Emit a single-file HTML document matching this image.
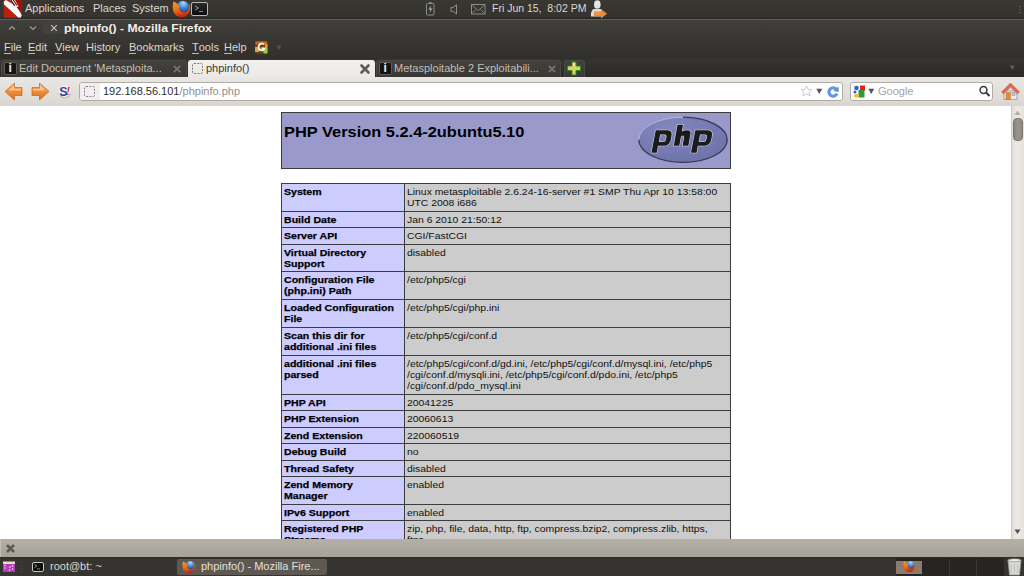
<!DOCTYPE html>
<html><head><meta charset="utf-8">
<style>
*{margin:0;padding:0;box-sizing:border-box}
html,body{width:1024px;height:576px;overflow:hidden;background:#fff}
body{position:relative;font-family:"Liberation Sans",sans-serif;font-size:11px}
.a{position:absolute}
svg.a{overflow:visible}
.t{position:absolute;white-space:pre;line-height:13px}
/* top panel */
#panel{left:0;top:0;width:1024px;height:19px;background:linear-gradient(#383732,#34332f 17px,#2a2926 18px)}
.pt{color:#dcd8cf;top:2px}
#title{left:0;top:19px;width:1024px;height:40px;background:linear-gradient(#63615c 0,#63615c 1px,#403f3b 1px,#393834 18px,#302f2c 100%)}
#menubar{display:none}
.mi{color:#dcd8cf;top:41px}
.mi u{text-decoration:none;border-bottom:1px solid #bdb9b0;display:inline-block;line-height:11px}
#tabstrip{left:0;top:59px;width:1024px;height:18px;background:linear-gradient(#353430,#2c2a28)}
#nav{left:0;top:77px;width:1024px;height:29px;background:linear-gradient(#e9e7e3,#e0ddd8 70%,#d8d4ce)}
#content{left:0;top:106px;width:1011px;height:433px;background:#fff;overflow:hidden}
#scroll{left:1011px;top:106px;width:13px;height:433px;background:linear-gradient(90deg,#dcd9d3,#eceae6 40%,#e6e3de)}
#findbar{left:0;top:539px;width:1024px;height:18px;background:linear-gradient(#b5b0a6,#a7a197)}
#bottom{left:0;top:557px;width:1024px;height:19px;background:linear-gradient(#2b2a27,#353430 2px,#353430)}
.ln{position:absolute;background:#3c3c3c}
.e{position:absolute;background:#ccccff}
.v{position:absolute;background:#cccccc}
.ct{position:absolute;white-space:pre;font-size:9.75px;line-height:11.15px;color:#000;transform-origin:0 0}
.eb{font-weight:bold;transform:scaleX(1.085);-webkit-text-stroke:0.25px #000}
.vr{transform:scaleX(1.065);color:#111}
.tab{position:absolute;top:60px;height:17px;background:linear-gradient(#42413d,#393834);border:1px solid #4a4944;border-bottom:none;border-radius:3px 3px 0 0}
.tabt{color:#c3bfb6;top:62px}
</style></head><body>

<!-- TOP PANEL -->
<div id="panel" class="a"></div>
<svg class="a" style="left:3px;top:0" width="19" height="18" viewBox="0 0 19 18">
  <rect x="0.7" y="0" width="18.2" height="17.8" fill="#a80f02"/>
  <path d="M0.8 4 L0.8 17.8 L15 17.8 Z" fill="#c42610" opacity="0.75"/>
  <path d="M0.8 1.2 L3 0 L9 3.5 L13.5 7 L16.5 11 L18.7 15 L17.8 17.5 L15.2 17.5 L8.5 11.2 L0.8 4.2 Z" fill="#fdfdfd"/>
  <path d="M6.5 0 L12 0 L15.5 6.5 L13 7.5 Z" fill="#f4ece8"/>
  <path d="M7 0 L8.5 0 L12.2 5.5 L11 6 Z" fill="#4a1408"/>
  <path d="M9.8 0 L11 0 L14.4 5.2 L13.4 5.8 Z" fill="#5a1c0c"/>
</svg>
<div class="t pt" style="left:25px">Applications</div>
<div class="t pt" style="left:93px">Places</div>
<div class="t pt" style="left:132px">System</div>
<!-- firefox icon -->
<svg width="0" height="0" style="position:absolute">
  <defs>
    <radialGradient id="ffg" cx="0.55" cy="0.2" r="0.8"><stop offset="0" stop-color="#a8dcff"/><stop offset="0.45" stop-color="#4a90dc"/><stop offset="1" stop-color="#1c3f96"/></radialGradient>
    <linearGradient id="ffo" x1="0" y1="0" x2="0.3" y2="1"><stop offset="0" stop-color="#f7a51e"/><stop offset="0.6" stop-color="#ec6a12"/><stop offset="1" stop-color="#c8280c"/></linearGradient>
    <symbol id="ff" viewBox="0 0 19 18">
      <circle cx="10.8" cy="6.8" r="6" fill="url(#ffg)"/>
      <path d="M1.5 1.2 L5 3.6 L7.6 6.2 L7 9.4 L9.6 12 L13 12.4 L16 10.4 L17.2 7 L16.4 2.6 Q18.6 5.5 18.2 9 Q17.6 13.5 13.2 16.6 Q8.5 18.2 4.5 15.8 Q1 13 0.7 8 Q0.6 4 1.5 1.2 Z" fill="url(#ffo)"/>
      <path d="M1 8 Q1.5 13 5 15.5 Q3 14.5 2 12 Z" fill="#d0300e"/>
    </symbol>
  </defs>
</svg>
<svg class="a" style="left:172px;top:0" width="19" height="18"><use href="#ff"/></svg>
<!-- terminal icon -->
<div class="a" style="left:191px;top:2px;width:17px;height:14px;border:1px solid #b8b6b0;border-radius:2px;background:linear-gradient(#2a2a2a,#0c0c0c)"></div>
<svg class="a" style="left:193px;top:4px" width="13" height="10" viewBox="0 0 13 10">
  <path d="M2 2 L5.5 4 L2 6" stroke="#9a9a9a" stroke-width="1" fill="none"/>
  <rect x="6" y="7" width="4" height="1" fill="#6a86a8"/>
</svg>
<!-- battery -->
<svg class="a" style="left:425px;top:1px" width="11" height="15" viewBox="0 0 11 15">
  <rect x="1.5" y="2.5" width="7.5" height="11.5" rx="1" fill="none" stroke="#8e8c86" stroke-width="1"/>
  <rect x="4" y="1" width="2.5" height="1.5" fill="#8e8c86"/>
  <path d="M6 4.5 L3.5 8.5 L5.5 8.5 L4.5 12 L7.5 7.5 L5.5 7.5 Z" fill="#9fb4c8"/>
</svg>
<!-- speaker -->
<svg class="a" style="left:450px;top:4px" width="8" height="11" viewBox="0 0 8 11">
  <path d="M1 3.5 L3 3.5 L6.5 0.8 L6.5 10 L3 7.3 L1 7.3 Z" fill="none" stroke="#8e8c86" stroke-width="1"/>
</svg>
<!-- mail -->
<svg class="a" style="left:471px;top:4px" width="15" height="11" viewBox="0 0 15 11">
  <rect x="0.5" y="0.5" width="13.5" height="9.5" fill="none" stroke="#8e8c86" stroke-width="1"/>
  <path d="M1.5 1.5 L7.2 6.5 L13 1.5 M1.5 9 L5 5.5 M13 9 L9.5 5.5" fill="none" stroke="#8e8c86" stroke-width="0.9"/>
</svg>
<div class="t pt" style="left:492px;transform:scaleX(0.953);transform-origin:0 0">Fri Jun 15,  8:02 PM</div>
<!-- user icon -->
<svg class="a" style="left:590px;top:0" width="18" height="19" viewBox="0 0 18 19">
  <ellipse cx="7.3" cy="4.5" rx="3.3" ry="4.3" fill="#e4e4e2"/>
  <path d="M1 16.5 Q0.5 10 4 9 L10.5 9 Q13 10 13 16.5 Z" fill="#dcdcda"/>
  <path d="M4 11.5 L11 11.5 L11 9 L17 13.8 L11 18.5 L11 16 L4 16 Z" fill="#ec8a3a"/>
  <path d="M5 12.5 L10 12.5 L10 15 L5 15 Z" fill="#f0a050" opacity="0.7"/>
</svg>
<div class="a" style="left:1019px;top:6px;width:2px;height:8px;background:repeating-linear-gradient(#5c5b56 0 1px,transparent 1px 3px)"></div>

<!-- TITLE BAR -->
<div id="title" class="a"></div>
<svg class="a" style="left:8px;top:23px" width="60" height="12" viewBox="0 0 60 12">
  <path d="M1 6.5 L4 3.5 L7 6.5" stroke="#9c9a94" stroke-width="1.2" fill="none"/>
  <path d="M22 3.5 L25 6.5 L28 3.5" stroke="#9c9a94" stroke-width="1.2" fill="none"/>
</svg>
<div class="a" style="left:43px;top:21px;width:20px;height:13px;background:#42413d;border-radius:2px"></div>
<svg class="a" style="left:49.5px;top:24px" width="8" height="8" viewBox="0 0 8 8">
  <path d="M1.2 1.2 L6.8 6.8 M6.8 1.2 L1.2 6.8" stroke="#c3c0b9" stroke-width="1.2"/>
</svg>
<div class="t" style="left:64px;top:22px;color:#f2efe8;font-weight:bold;transform:scaleX(1.105);transform-origin:0 0">phpinfo() - Mozilla Firefox</div>

<!-- MENU BAR -->
<div id="menubar" class="a"></div>
<div class="t mi" style="left:4px"><u>F</u>ile</div>
<div class="t mi" style="left:28px"><u>E</u>dit</div>
<div class="t mi" style="left:55px"><u>V</u>iew</div>
<div class="t mi" style="left:86px">Hi<u>s</u>tory</div>
<div class="t mi" style="left:129px"><u>B</u>ookmarks</div>
<div class="t mi" style="left:192px"><u>T</u>ools</div>
<div class="t mi" style="left:224px"><u>H</u>elp</div>
<svg class="a" style="left:254.5px;top:41px" width="13" height="13" viewBox="0 0 13 13">
  <rect x="0" y="0" width="12.5" height="12.5" rx="1.5" fill="#7a3e12"/>
  <rect x="0.5" y="0.5" width="11.5" height="3" fill="#c87a2a" opacity="0.8"/>
  <rect x="0" y="6" width="4" height="5" fill="#e8c070" opacity="0.8"/>
  <rect x="8.5" y="6.5" width="4" height="6" fill="#9ccc3c"/>
  <rect x="10" y="3" width="2.5" height="4" fill="#f09a20"/>
  <rect x="4.5" y="6.5" width="4" height="3" fill="#a8d040" opacity="0.8"/>
  <path d="M9.2 3.3 Q7.8 2.2 6 2.6 Q3.4 3.4 3.6 6.5 Q4 9.6 7 9.4 Q8.8 9.2 9.4 7.6 L7 7.2" stroke="#fbf6ea" stroke-width="1.7" fill="none"/>
</svg>
<svg class="a" style="left:276px;top:45px" width="7" height="6" viewBox="0 0 7 6"><path d="M0.5 0.5 L5.5 0.5 L3 5 Z" fill="#55534f"/></svg>

<!-- TABS -->
<div id="tabstrip" class="a"></div>
<div class="tab" style="left:1px;width:186px"></div>
<div class="a" style="left:4px;top:62px;width:13px;height:13px;background:#141414;border:1px solid #5e5d58;border-radius:2px"></div>
<div class="t" style="left:8.5px;top:62px;color:#f0f0f0;font-weight:bold;font-size:12px;line-height:12px;font-family:'Liberation Sans',sans-serif">i</div>
<div class="t tabt" style="left:19px">Edit Document 'Metasploita...</div>
<svg class="a" style="left:173px;top:65px" width="8" height="8" viewBox="0 0 8 8"><path d="M0.8 0.8 L7.2 7.2 M7.2 0.8 L0.8 7.2" stroke="#75736d" stroke-width="1.8"/></svg>

<div class="a" style="left:188px;top:60px;width:187px;height:18px;background:linear-gradient(#f1f0ee,#ebe9e5);border-radius:3px 3px 0 0"></div>
<svg class="a" style="left:192px;top:63px" width="11" height="11" viewBox="0 0 11 11"><rect x="0.5" y="0.5" width="10" height="10" rx="1.5" fill="none" stroke="#7a7874" stroke-width="1" stroke-dasharray="2 1.3"/></svg>
<div class="t" style="left:206px;top:62px;color:#3a3935">phpinfo()</div>
<svg class="a" style="left:360px;top:64px" width="10" height="10" viewBox="0 0 10 10"><path d="M1.5 1.5 L8.5 8.5 M8.5 1.5 L1.5 8.5" stroke="#5e5c57" stroke-width="2.6" stroke-linecap="round"/></svg>

<div class="tab" style="left:376px;width:185px"></div>
<div class="a" style="left:379px;top:62px;width:13px;height:13px;background:#141414;border:1px solid #5e5d58;border-radius:2px"></div>
<div class="t" style="left:383.5px;top:62px;color:#f0f0f0;font-weight:bold;font-size:12px;line-height:12px;font-family:'Liberation Sans',sans-serif">i</div>
<div class="t tabt" style="left:394px">Metasploitable 2 Exploitabili...</div>
<svg class="a" style="left:548px;top:65px" width="8" height="8" viewBox="0 0 8 8"><path d="M0.8 0.8 L7.2 7.2 M7.2 0.8 L0.8 7.2" stroke="#75736d" stroke-width="1.8"/></svg>

<div class="tab" style="left:564px;width:21px"></div>
<svg class="a" style="left:566px;top:61px" width="16" height="15" viewBox="0 0 16 15">
  <path d="M6 1 L10 1 L10 5 L14.5 5 L14.5 9.5 L10 9.5 L10 14 L6 14 L6 9.5 L1.5 9.5 L1.5 5 L6 5 Z" fill="#d6d45c" stroke="#2f8a2a" stroke-width="1"/>
  <path d="M7 2 L9 2 L9 5 L7 5 Z" fill="#efe6b0"/>
</svg>
<svg class="a" style="left:1009px;top:65px" width="7" height="6" viewBox="0 0 7 6"><path d="M0.5 0.5 L6 0.5 L3.25 5 Z" fill="#5c5b56"/></svg>

<!-- NAV -->
<div id="nav" class="a"></div>
<svg class="a" style="left:4px;top:82px" width="19" height="19" viewBox="0 0 19 19">
  <defs><linearGradient id="ar" x1="0" y1="0" x2="0" y2="1"><stop offset="0" stop-color="#f6bb7c"/><stop offset="0.5" stop-color="#ec8d3c"/><stop offset="1" stop-color="#dc6d1c"/></linearGradient></defs>
  <path d="M1 9.5 L10.5 1 L10.5 5.5 L18 5.5 L18 13.5 L10.5 13.5 L10.5 18 Z" fill="url(#ar)" stroke="#d0601a" stroke-width="0.7"/>
  <path d="M5 8 L10 3.5 L10 7 L17 7 L17 8.5 L6 8.5 Z" fill="#fad4a0" opacity="0.75"/>
</svg>
<svg class="a" style="left:31px;top:82px" width="19" height="19" viewBox="0 0 19 19">
  <path d="M18 9.5 L8.5 1 L8.5 5.5 L1 5.5 L1 13.5 L8.5 13.5 L8.5 18 Z" fill="url(#ar)" stroke="#d0601a" stroke-width="0.7"/>
  <path d="M14 8 L9 3.5 L9 7 L2 7 L2 8.5 L13 8.5 Z" fill="#fad4a0" opacity="0.75"/>
</svg>
<svg class="a" style="left:58px;top:85px" width="14" height="14" viewBox="0 0 14 14">
  <circle cx="6.8" cy="6.6" r="6" fill="#f2f2f4"/>
  <path d="M2 10.5 A6 6 0 0 0 12.5 8" stroke="#b8b8c0" stroke-width="1.2" fill="none"/>
  <text x="1.3" y="10.8" font-family="Liberation Sans" font-weight="bold" font-size="12.5" fill="#1f4a9e">S</text>
  <text x="8.6" y="10.3" font-family="Liberation Sans" font-weight="bold" font-style="italic" font-size="10" fill="#e3121a">!</text>
</svg>
<div class="a" style="left:79px;top:82px;width:764px;height:19px;background:#fff;border:1px solid #b0aca5;border-radius:3px"></div>
<div class="a" style="left:80px;top:83px;width:20px;height:17px;background:#f0efed;border-radius:2px 0 0 2px"></div>
<svg class="a" style="left:84px;top:86px" width="11" height="11" viewBox="0 0 11 11"><rect x="0.5" y="0.5" width="10" height="10" rx="1.5" fill="none" stroke="#8a8090" stroke-width="1" stroke-dasharray="2 1.3"/></svg>
<div class="t" style="left:103px;top:85px;color:#2e2e2e">192.168.56.101<span style="color:#8f8f8f">/phpinfo.php</span></div>
<svg class="a" style="left:800px;top:85px" width="13" height="12" viewBox="0 0 13 12">
  <path d="M6.5 0.8 L8.1 4.3 L11.9 4.6 L9 7.1 L9.9 10.9 L6.5 8.9 L3.1 10.9 L4 7.1 L1.1 4.6 L4.9 4.3 Z" fill="#fff" stroke="#c6c6c6" stroke-width="0.9"/>
</svg>
<svg class="a" style="left:816px;top:88px" width="7" height="7" viewBox="0 0 7 7"><path d="M0.3 0.8 L6.2 0.8 L3.25 6 Z" fill="#555"/></svg>
<svg class="a" style="left:827px;top:86px" width="12" height="12" viewBox="0 0 12 12">
  <path d="M9.6 3.6 A4.2 4.2 0 1 0 10 7.6" stroke="#6298e0" stroke-width="3.2" fill="none"/>
  <path d="M11.6 0.6 L11.6 6 L6.4 5 Z" fill="#5a90dc"/>
</svg>
<div class="a" style="left:850px;top:82px;width:143px;height:19px;background:#fff;border:1px solid #b0aca5;border-radius:3px"></div>
<svg class="a" style="left:853px;top:85px" width="13" height="13" viewBox="0 0 13 13">
  <rect x="7" y="0.5" width="5" height="5" fill="#e8201a"/>
  <rect x="5.5" y="5" width="6" height="7.5" fill="#2f9a3a"/>
  <circle cx="3.5" cy="3" r="2.3" fill="#2a66c8"/>
  <circle cx="2" cy="7" r="1.5" fill="#2a66c8"/>
  <ellipse cx="3.5" cy="10.8" rx="2.6" ry="1.8" fill="#f5b820"/>
</svg>
<svg class="a" style="left:868px;top:88px" width="7" height="7" viewBox="0 0 7 7"><path d="M0.3 0.8 L6.2 0.8 L3.25 6 Z" fill="#555"/></svg>
<div class="t" style="left:878px;top:85px;color:#a3a3a3">Google</div>
<svg class="a" style="left:978px;top:85px" width="13" height="13" viewBox="0 0 13 13">
  <circle cx="5.5" cy="5" r="3.4" stroke="#383838" stroke-width="1.5" fill="none"/>
  <path d="M8 7.5 L11.5 11" stroke="#383838" stroke-width="2"/>
</svg>
<svg class="a" style="left:1001px;top:82px" width="19" height="19" viewBox="0 0 19 19">
  <rect x="3" y="9" width="13" height="8.5" fill="#ececea" stroke="#9a9a96" stroke-width="0.8"/>
  <rect x="5" y="10.5" width="4.5" height="6.8" fill="#e8892c" stroke="#b86a20" stroke-width="0.4"/>
  <rect x="11" y="10.5" width="3" height="3" fill="#b8c8d8" stroke="#8a8a8a" stroke-width="0.5"/>
  <path d="M0.6 10 L9.5 1 L18.4 10 L16.4 11.8 L9.5 5 L2.6 11.8 Z" fill="#e0655a" stroke="#c04a3a" stroke-width="0.5"/>
</svg>

<!-- CONTENT -->
<div id="content" class="a"></div>
<div class="a" style="left:281px;top:112px;width:450px;height:57px;background:#9999cc;border:1px solid #3c3c3c"></div>
<div class="t" style="left:284px;top:124px;font-size:14.2px;line-height:16px;font-weight:bold;color:#000;transform:scaleX(1.156);transform-origin:0 0">PHP Version 5.2.4-2ubuntu5.10</div>
<svg class="a" style="left:636px;top:115px" width="94" height="52" viewBox="0 0 94 52">
  <defs>
    <radialGradient id="lg" cx="0.35" cy="0.25" r="0.85">
      <stop offset="0" stop-color="#8387bf"/>
      <stop offset="1" stop-color="#6d71a9"/>
    </radialGradient>
  </defs>
  <ellipse cx="47" cy="24.8" rx="44.2" ry="22.6" fill="url(#lg)"/>
  <path d="M2.8 24.8 A44.2 22.6 0 0 1 47 2.2" stroke="#b8bae0" stroke-width="1" fill="none" opacity="0.9"/>
  <path d="M47 2.2 A44.2 22.6 0 0 1 91.2 24.8 A44.2 22.6 0 0 1 47 47.4 A44.2 22.6 0 0 1 2.8 24.8" stroke="#2a2a3e" stroke-width="1.3" fill="none" opacity="0.85"/>
  <g transform="translate(8 5) translate(0 25.8) skewX(-10) translate(0 -25.8)" fill="#1b1b1b" stroke="#e6e6f0" stroke-width="1" paint-order="stroke" fill-rule="evenodd">
    <path d="M9 10.2 H21 Q26 10.2 25.8 16.5 V19.5 Q25.6 25.8 19.8 25.8 H14 V32.8 H8.6 Z M14.2 14.6 H18.6 Q20.9 14.6 20.9 17 V19.8 Q20.9 22.1 18.5 22.1 H14.2 Z"/>
    <path d="M29.8 4.7 H35.3 V11.6 Q37.2 10.2 40.6 10.2 Q45 10.3 44.4 14.8 V25.8 H38.6 V17.2 Q38.6 15.6 37.2 15.6 Q35.4 15.6 35.3 17.4 V25.8 H29.8 Z"/>
    <path d="M48.6 10.2 H61 Q66.4 10.2 66.2 16.5 V19.5 Q66 25.8 60 25.8 H53.8 V32.8 H48.2 Z M54 14.6 H58.9 Q61.3 14.6 61.3 17 V19.8 Q61.3 22.1 58.8 22.1 H54 Z"/>
  </g>
</svg>
<div class="e" style="left:281px;top:183px;width:124px;height:365px"></div>
<div class="v" style="left:404px;top:183px;width:327px;height:365px"></div>
<div class="ln" style="left:281px;top:183px;width:450px;height:1px"></div>
<div class="ln" style="left:281px;top:211px;width:450px;height:1px"></div>
<div class="ln" style="left:281px;top:227px;width:450px;height:1px"></div>
<div class="ln" style="left:281px;top:244px;width:450px;height:1px"></div>
<div class="ln" style="left:281px;top:271px;width:450px;height:1px"></div>
<div class="ln" style="left:281px;top:299px;width:450px;height:1px"></div>
<div class="ln" style="left:281px;top:327px;width:450px;height:1px"></div>
<div class="ln" style="left:281px;top:355px;width:450px;height:1px"></div>
<div class="ln" style="left:281px;top:394px;width:450px;height:1px"></div>
<div class="ln" style="left:281px;top:410px;width:450px;height:1px"></div>
<div class="ln" style="left:281px;top:427px;width:450px;height:1px"></div>
<div class="ln" style="left:281px;top:443px;width:450px;height:1px"></div>
<div class="ln" style="left:281px;top:460px;width:450px;height:1px"></div>
<div class="ln" style="left:281px;top:476px;width:450px;height:1px"></div>
<div class="ln" style="left:281px;top:504px;width:450px;height:1px"></div>
<div class="ln" style="left:281px;top:520px;width:450px;height:1px"></div>
<div class="ln" style="left:281px;top:548px;width:450px;height:1px"></div>
<div class="ln" style="left:281px;top:183px;width:1px;height:365px"></div>
<div class="ln" style="left:404px;top:183px;width:1px;height:365px"></div>
<div class="ln" style="left:730px;top:183px;width:1px;height:365px"></div>
<div class="ct eb" style="left:284px;top:185.90px">System</div>
<div class="ct vr" style="left:407px;top:185.90px">Linux metasploitable 2.6.24-16-server #1 SMP Thu Apr 10 13:58:00</div>
<div class="ct vr" style="left:407px;top:197.10px">UTC 2008 i686</div>
<div class="ct eb" style="left:284px;top:213.90px">Build Date</div>
<div class="ct vr" style="left:407px;top:213.90px">Jan 6 2010 21:50:12</div>
<div class="ct eb" style="left:284px;top:229.90px">Server API</div>
<div class="ct vr" style="left:407px;top:229.90px">CGI/FastCGI</div>
<div class="ct eb" style="left:284px;top:246.90px">Virtual Directory</div>
<div class="ct eb" style="left:284px;top:258.10px">Support</div>
<div class="ct vr" style="left:407px;top:246.90px">disabled</div>
<div class="ct eb" style="left:284px;top:273.90px">Configuration File</div>
<div class="ct eb" style="left:284px;top:285.10px">(php.ini) Path</div>
<div class="ct vr" style="left:407px;top:273.90px">/etc/php5/cgi</div>
<div class="ct eb" style="left:284px;top:301.90px">Loaded Configuration</div>
<div class="ct eb" style="left:284px;top:313.10px">File</div>
<div class="ct vr" style="left:407px;top:301.90px">/etc/php5/cgi/php.ini</div>
<div class="ct eb" style="left:284px;top:329.90px">Scan this dir for</div>
<div class="ct eb" style="left:284px;top:341.10px">additional .ini files</div>
<div class="ct vr" style="left:407px;top:329.90px">/etc/php5/cgi/conf.d</div>
<div class="ct eb" style="left:284px;top:357.90px">additional .ini files</div>
<div class="ct eb" style="left:284px;top:369.10px">parsed</div>
<div class="ct vr" style="left:407px;top:357.90px">/etc/php5/cgi/conf.d/gd.ini, /etc/php5/cgi/conf.d/mysql.ini, /etc/php5</div>
<div class="ct vr" style="left:407px;top:369.10px">/cgi/conf.d/mysqli.ini, /etc/php5/cgi/conf.d/pdo.ini, /etc/php5</div>
<div class="ct vr" style="left:407px;top:380.30px">/cgi/conf.d/pdo_mysql.ini</div>
<div class="ct eb" style="left:284px;top:396.90px">PHP API</div>
<div class="ct vr" style="left:407px;top:396.90px">20041225</div>
<div class="ct eb" style="left:284px;top:412.90px">PHP Extension</div>
<div class="ct vr" style="left:407px;top:412.90px">20060613</div>
<div class="ct eb" style="left:284px;top:429.90px">Zend Extension</div>
<div class="ct vr" style="left:407px;top:429.90px">220060519</div>
<div class="ct eb" style="left:284px;top:445.90px">Debug Build</div>
<div class="ct vr" style="left:407px;top:445.90px">no</div>
<div class="ct eb" style="left:284px;top:462.90px">Thread Safety</div>
<div class="ct vr" style="left:407px;top:462.90px">disabled</div>
<div class="ct eb" style="left:284px;top:478.90px">Zend Memory</div>
<div class="ct eb" style="left:284px;top:490.10px">Manager</div>
<div class="ct vr" style="left:407px;top:478.90px">enabled</div>
<div class="ct eb" style="left:284px;top:506.90px">IPv6 Support</div>
<div class="ct vr" style="left:407px;top:506.90px">enabled</div>
<div class="ct eb" style="left:284px;top:522.90px">Registered PHP</div>
<div class="ct eb" style="left:284px;top:534.10px">Streams</div>
<div class="ct vr" style="left:407px;top:522.90px">zip, php, file, data, http, ftp, compress.bzip2, compress.zlib, https,</div>
<div class="ct vr" style="left:407px;top:534.10px">ftps</div>

<!-- SCROLLBAR -->
<div id="scroll" class="a"></div>
<div class="a" style="left:1011px;top:106px;width:13px;height:433px;border-left:1px solid #cfcbc4"></div>
<svg class="a" style="left:1014px;top:110px" width="7" height="6" viewBox="0 0 7 6"><path d="M3.5 0.5 L6.5 5 L0.5 5 Z" fill="#b4b0a9"/></svg>
<div class="a" style="left:1013px;top:118px;width:10px;height:23px;background:linear-gradient(90deg,#8a847b,#9c968d 50%,#8d877e);border-radius:4px;border:1px solid #7a746b"></div>
<svg class="a" style="left:1014px;top:529px" width="7" height="6" viewBox="0 0 7 6"><path d="M0.5 0.5 L6.5 0.5 L3.5 5 Z" fill="#55534e"/></svg>

<!-- FIND BAR -->
<div id="findbar" class="a"></div>
<div class="a" style="left:0;top:539px;width:1px;height:18px;background:#c4c0b7"></div>
<svg class="a" style="left:5px;top:543px" width="11" height="11" viewBox="0 0 11 11"><path d="M2 2 L9 9 M9 2 L2 9" stroke="#5c5a55" stroke-width="2.6"/></svg>

<!-- BOTTOM PANEL -->
<div id="bottom" class="a"></div>
<svg class="a" style="left:3px;top:561px" width="13" height="12" viewBox="0 0 13 12">
  <rect x="0" y="0.5" width="12" height="2.5" fill="#ecdcc4"/>
  <rect x="0" y="3" width="12" height="8" fill="#b43cb8"/>
  <circle cx="2" cy="4.5" r="0.7" fill="#fff"/><circle cx="2" cy="7" r="0.7" fill="#fff"/>
  <circle cx="7" cy="6" r="0.7" fill="#fff"/><circle cx="9.5" cy="5" r="0.7" fill="#fff"/><circle cx="9.5" cy="8" r="0.7" fill="#fff"/><circle cx="6.5" cy="9" r="0.7" fill="#fff"/>
</svg>
<div class="a" style="left:21px;top:562px;width:2px;height:10px;background:repeating-linear-gradient(#45443f 0 1px,transparent 1px 3px)"></div>
<div class="a" style="left:32px;top:562px;width:12px;height:10px;border:1px solid #c8c6c0;border-radius:2px;background:#0e0e0e"></div>
<svg class="a" style="left:34px;top:564px" width="8" height="6" viewBox="0 0 8 6"><path d="M0.5 0.5 L3 2 L0.5 3.5" stroke="#a0a0a0" stroke-width="0.8" fill="none"/><rect x="3" y="4.5" width="3" height="0.8" fill="#8aa0c0"/></svg>
<div class="t" style="left:50px;top:560px;color:#dcd8cf">root@bt: ~</div>

<div class="a" style="left:177px;top:559px;width:150px;height:16px;background:#5e5853;border-radius:2px"></div>
<svg class="a" style="left:182px;top:560px" width="14" height="14" viewBox="0 0 19 18"><use href="#ff" width="19" height="18"/></svg>
<div class="t" style="left:201px;top:560px;color:#e4e0d8">phpinfo() - Mozilla Fire...</div>

<div class="a" style="left:896px;top:558px;width:108px;height:18px;background:#262523"></div>
<div class="a" style="left:896px;top:561px;width:26px;height:13px;background:#8d7b70"></div>
<svg class="a" style="left:903px;top:560px" width="13" height="13" viewBox="0 0 19 18"><use href="#ff" width="19" height="18"/></svg>
<div class="a" style="left:949px;top:559px;width:1px;height:17px;background:#3a3936"></div>
<div class="a" style="left:976px;top:559px;width:1px;height:17px;background:#3a3936"></div>
<svg class="a" style="left:1007px;top:558px" width="15" height="18" viewBox="0 0 15 18">
  <path d="M1 2 L14 2 L12.5 17 L2.5 17 Z" fill="#d8d8d6" stroke="#9a9a98" stroke-width="0.8"/>
  <ellipse cx="7.5" cy="2.2" rx="6.5" ry="1.5" fill="#eeeeec" stroke="#8a8a88" stroke-width="0.7"/>
  <path d="M4 6 L4.5 15 M7.5 6 L7.5 15 M11 6 L10.5 15" stroke="#b0b0ae" stroke-width="0.6"/>
</svg>

</body></html>
